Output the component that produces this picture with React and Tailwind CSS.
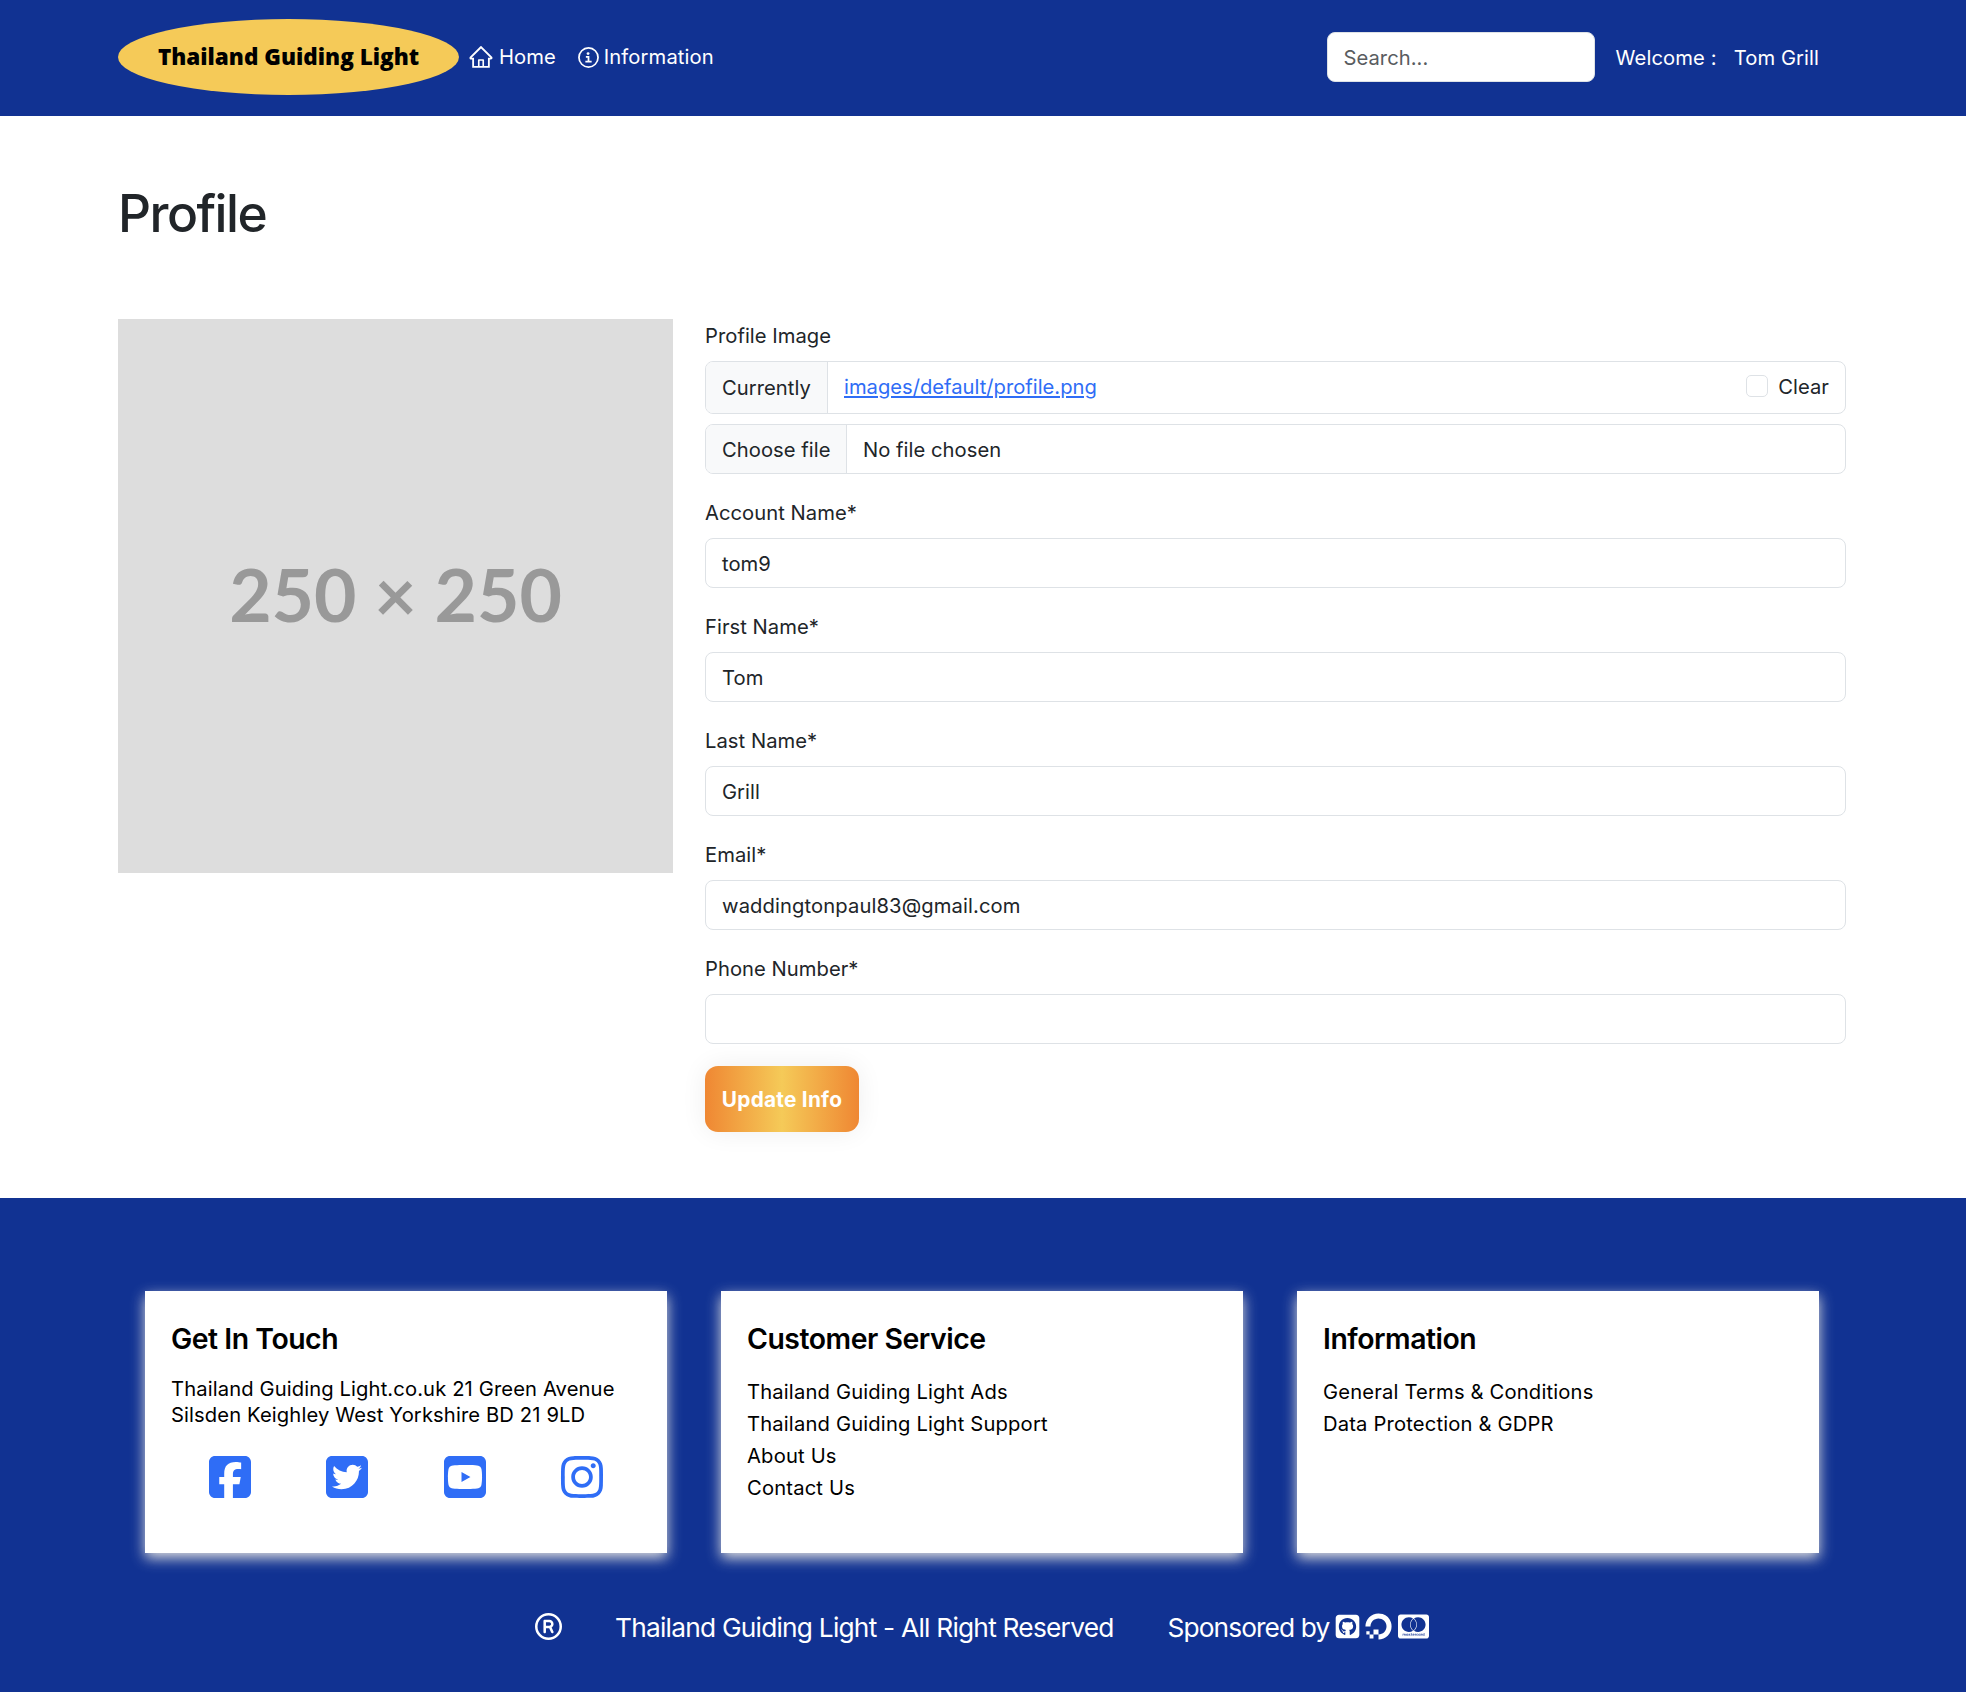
import React from "react";
import { AiOutlineHome } from "react-icons/ai";
import {
  FaSquareFacebook, FaSquareTwitter, FaSquareYoutube, FaInstagram,
  FaRegRegistered, FaSquareGithub, FaDigitalOcean, FaCcMastercard,
} from "react-icons/fa6";

function InfoIcon() {
  return (
    <svg viewBox="0 0 24 24" className="size-[21px]" fill="none" stroke="currentColor" strokeWidth="2">
      <circle cx="12" cy="12" r="10.9" />
      <path d="M9 11.2h3v5.6M8.4 16.8h7.2" />
      <circle cx="11.5" cy="7.5" r="1.6" fill="currentColor" stroke="none" />
    </svg>
  );
}

function Header() {
  return (
    <header className="flex h-[116px] items-start bg-[#113292] px-[118px] text-white">
      <a className="mt-[19px] flex h-[76px] w-[341px] items-center justify-center rounded-[50%] bg-[#f5ca58] pb-px font-['Open_Sans'] text-[22.5px] font-extrabold tracking-[0] whitespace-nowrap text-black">
        Thailand Guiding Light
      </a>
      <nav className="mt-[42px] flex h-[30px] items-center">
        <a className="ml-[9px] flex items-center gap-[5px]"><AiOutlineHome className="size-[26px]" /><span className="pt-px">Home</span></a>
        <a className="ml-[22px] flex items-center gap-[5px]"><InfoIcon /><span className="pt-px tracking-[0.12px]">Information</span></a>
      </nav>
      <div className="mt-[32px] ml-auto flex h-[50px] items-center">
        <div className="flex h-[50px] w-[268px] items-center rounded-[8px] border border-[#dee2e6] bg-white px-4 pt-[2px] text-[#595c5f]">Search...</div>
        <span className="ml-[21px] pt-[2px] tracking-[0.12px] whitespace-pre">Welcome :</span>
        <span className="mr-[29px] ml-[17px] pt-[2px] tracking-[0.08px]">Tom Grill</span>
      </div>
    </header>
  );
}

function Field({ label, value }) {
  return (
    <div className="h-[114px]">
      <label className="block h-[39px] leading-[27px]">{label}</label>
      <div className="flex h-[50px] items-center rounded-[8px] border border-[#dee2e6] px-4 pt-[2px]">{value}</div>
    </div>
  );
}

function Card({ title, children }) {
  return (
    <section className="h-[262px] w-[522px] bg-white px-[26px] pt-[31px] text-black shadow-[0_5px_13px_0_#dedede]">
      <h5 className="h-[55px] text-[28.4px] leading-[34px] font-semibold tracking-[-0.47px]">{title}</h5>
      {children}
    </section>
  );
}

function Links({ items }) {
  return (
    <ul>{items.map((t) => <li key={t} className="h-8 leading-[30px] tracking-[0.17px]">{t}</li>)}</ul>
  );
}

export default function App() {
  return (
    <div className="flex h-[1692px] w-[1966px] flex-col bg-white font-['Inter',sans-serif] text-[20.2px] tracking-[0.04px] text-[#212529]">
      <Header />
      <main className="h-[1082px] px-[118px]">
        <h1 className="pt-[66px] text-[51.5px] leading-[62px] font-medium tracking-[-1.55px]">Profile</h1>
        <div className="mt-[75px] flex items-start">
          <div className="flex h-[554px] w-[555px] items-center justify-center bg-[#ddd] pb-[2px] font-['Lato'] text-[73.2px] font-bold tracking-normal text-[#999]">
            250 × 250
          </div>
          <form className="ml-[32px] w-[1141px]">
            <label className="block h-[42px] pt-[3px] leading-[27px]">Profile Image</label>
            <div className="flex h-[53px] rounded-[8px] border border-[#dee2e6]">
              <span className="flex w-[122px] items-center rounded-l-[7px] border-r border-[#dee2e6] bg-[#f8f9fa] pt-px pl-4">Currently</span>
              <a className="mt-[10px] ml-4 leading-[30px] tracking-[0] text-[#2f6df6] underline">images/default/profile.png</a>
              <span className="mt-[13px] ml-auto size-[22px] rounded-[5px] border border-[#dee2e6]" />
              <span className="mt-[10px] mr-4 ml-[10px] leading-[30px]">Clear</span>
            </div>
            <div className="mt-[10px] mb-[25px] flex h-[50px] items-stretch rounded-[8px] border border-[#dee2e6]">
              <span className="flex w-[141px] items-center rounded-l-[7px] border-r border-[#dee2e6] bg-[#f8f9fa] pt-[2px] pl-4">Choose file</span>
              <span className="flex items-center pt-[2px] pl-4">No file chosen</span>
            </div>
            <Field label="Account Name*" value="tom9" />
            <Field label="First Name*" value="Tom" />
            <Field label="Last Name*" value="Grill" />
            <Field label="Email*" value={<span className="tracking-[0.11px]">waddingtonpaul83@gmail.com</span>} />
            <Field label="Phone Number*" value="" />
            <button type="button" className="-mt-[3px] block h-[66px] w-[154px] rounded-[13px] bg-[linear-gradient(to_right,#ef8733_0%,#f5ca58_50%,#ef8733_100%)] pt-px text-[20.8px] font-bold tracking-[0.25px] text-white shadow-[0_0_26px_#eee]">
              Update Info
            </button>
          </form>
        </div>
      </main>
      <footer className="h-[494px] bg-[#113292] pt-[93px] text-white">
        <div className="flex justify-between pr-[147px] pl-[145px]">
          <Card title="Get In Touch">
            <p className="-mt-px leading-[26px] tracking-[0.12px] whitespace-nowrap">Thailand Guiding Light.co.uk 21 Green Avenue<br />Silsden Keighley West Yorkshire BD 21 9LD</p>
            <div className="mt-[25px] flex gap-[69.3px] pl-[35px] text-[48px] text-[#2f6df6]">
              <FaSquareFacebook /><FaSquareTwitter /><FaSquareYoutube /><FaInstagram />
            </div>
          </Card>
          <Card title="Customer Service">
            <Links items={["Thailand Guiding Light Ads", "Thailand Guiding Light Support", "About Us", "Contact Us"]} />
          </Card>
          <Card title="Information">
            <Links items={["General Terms & Conditions", "Data Protection & GDPR"]} />
          </Card>
        </div>
        <div className="mt-[58px] flex h-[31px] items-center pl-[535px] text-[26.3px] tracking-[-0.77px] whitespace-nowrap">
          <FaRegRegistered className="size-[27px]" />
          <span className="ml-[53px] pt-[2px]">Thailand Guiding Light - All Right Reserved</span>
          <span className="ml-[54px] pt-[2px] tracking-[-0.9px]">Sponsored by</span>
          <FaSquareGithub className="ml-[5px] size-[27px]" />
          <FaDigitalOcean className="ml-[4px] size-[27px]" />
          <FaCcMastercard className="ml-[6px] size-[31px]" />
        </div>
      </footer>
    </div>
  );
}
